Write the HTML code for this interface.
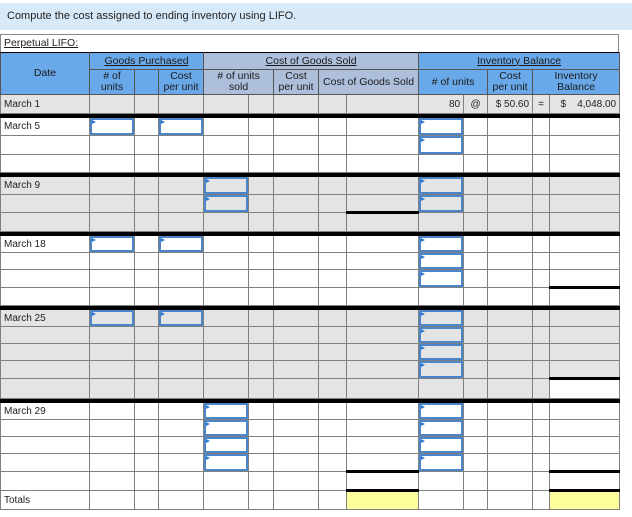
<!DOCTYPE html>
<html><head><style>
body{margin:0;background:#fff;font-family:"Liberation Sans",Arial,sans-serif;font-size:10px;color:#222;width:632px;height:517px;overflow:hidden;position:relative}
.tabs{position:absolute;top:0;left:0;width:632px;height:3px;border-bottom:1px solid #bbb}
.title{position:absolute;top:3px;left:0;width:632px;height:27px;background:#d8eaf8;font-size:11px;line-height:27px;padding-left:7px;box-sizing:border-box;color:#222}
.pl{position:absolute;top:34px;left:0;width:619px;height:18px;border:1px solid #888;border-bottom:none;box-sizing:border-box;line-height:16px;padding-left:3px;text-decoration:underline;font-size:10.5px}
table{position:absolute;top:52px;left:0;border-collapse:collapse;table-layout:fixed;width:619px}
td{border:1px solid #808080;padding:0;height:16px;position:relative;overflow:visible;white-space:nowrap}
.h td{text-align:center;line-height:11px;border-color:#555;font-size:10.5px;color:#1a1a1a}
.b{background:#6aa9e9}.l{background:#aebfdc}
.g td{background:#e4e4e4}
.sep td{height:3px;background:#000;border:1px solid #000}
.dl{padding-left:3px}
.in::after{content:"";position:absolute;left:0;top:0;right:0;bottom:0;border:2px solid #4a86c8;background:#fff}
.g .in::after{background:#e4e4e4}
.in::before{content:"";position:absolute;left:2px;top:2px;border-left:4px solid #2a7ad8;border-top:2px solid transparent;border-bottom:2px solid transparent;z-index:2}
.y{background:#fdfd9c!important}
.tk{border-top:3px solid #000}
.r{text-align:right;padding-right:3px}
.c{text-align:center}
u{text-decoration:underline}
</style></head><body>
<div class="tabs"></div>
<div class="title">Compute the cost assigned to ending inventory using LIFO.</div>
<div class="pl">Perpetual LIFO:</div>
<table>
<colgroup><col style="width:89px"><col style="width:45px"><col style="width:24px"><col style="width:45px"><col style="width:45px"><col style="width:25px"><col style="width:45px"><col style="width:28px"><col style="width:72px"><col style="width:45px"><col style="width:24px"><col style="width:45px"><col style="width:17px"><col style="width:70px"></colgroup>
<tr class="h" style="height:17px"><td class="b" rowspan="2" style="border-top:1px solid #000">Date</td><td class="b" colspan="3" style="border-top:1px solid #000"><u>Goods Purchased</u></td><td class="l" colspan="5" style="border-top:1px solid #000"><u>Cost of Goods Sold</u></td><td class="b" colspan="5" style="border-top:1px solid #000"><u>Inventory Balance</u></td></tr>
<tr class="h" style="height:25px"><td class="b"># of<br>units</td><td class="b"></td><td class="b">Cost<br>per unit</td><td class="l" colspan="2"># of units<br>sold</td><td class="l">Cost<br>per unit</td><td class="l" colspan="2">Cost of Goods Sold</td><td class="b" colspan="2"># of units</td><td class="b">Cost<br>per unit</td><td class="b" colspan="2">Inventory<br>Balance</td></tr>
<tr class="g" style="height:19px"><td class="dl">March 1</td><td></td><td></td><td></td><td></td><td></td><td></td><td></td><td></td><td class="r">80</td><td class="c">@</td><td class="r">$ 50.60</td><td class="c">=</td><td class="r">$ &nbsp;&nbsp;&nbsp;4,048.00</td></tr>
<tr class="sep"><td colspan="14"></td></tr>
<tr style="height:18px"><td class="dl">March 5</td><td class="in"></td><td></td><td class="in"></td><td></td><td></td><td></td><td></td><td></td><td class="in"></td><td></td><td></td><td></td><td></td></tr>
<tr style="height:19px"><td></td><td></td><td></td><td></td><td></td><td></td><td></td><td></td><td></td><td class="in"></td><td></td><td></td><td></td><td></td></tr>
<tr style="height:18px"><td></td><td></td><td></td><td></td><td></td><td></td><td></td><td></td><td></td><td></td><td></td><td></td><td></td><td></td></tr>
<tr class="sep"><td colspan="14"></td></tr>
<tr class="g" style="height:18px"><td class="dl">March 9</td><td></td><td></td><td></td><td class="in"></td><td></td><td></td><td></td><td></td><td class="in"></td><td></td><td></td><td></td><td></td></tr>
<tr class="g" style="height:17px"><td></td><td></td><td></td><td></td><td class="in"></td><td></td><td></td><td></td><td></td><td class="in"></td><td></td><td></td><td></td><td></td></tr>
<tr class="g" style="height:19px"><td></td><td></td><td></td><td></td><td></td><td></td><td></td><td></td><td class="tk"></td><td></td><td></td><td></td><td></td><td></td></tr>
<tr class="sep"><td colspan="14"></td></tr>
<tr style="height:17px"><td class="dl">March 18</td><td class="in"></td><td></td><td class="in"></td><td></td><td></td><td></td><td></td><td></td><td class="in"></td><td></td><td></td><td></td><td></td></tr>
<tr style="height:17px"><td></td><td></td><td></td><td></td><td></td><td></td><td></td><td></td><td></td><td class="in"></td><td></td><td></td><td></td><td></td></tr>
<tr style="height:17px"><td></td><td></td><td></td><td></td><td></td><td></td><td></td><td></td><td></td><td class="in"></td><td></td><td></td><td></td><td></td></tr>
<tr style="height:16px"><td></td><td></td><td></td><td></td><td></td><td></td><td></td><td></td><td></td><td></td><td></td><td></td><td></td><td class="tk"></td></tr>
<tr class="sep"><td colspan="14"></td></tr>
<tr class="g" style="height:17px"><td class="dl">March 25</td><td class="in"></td><td></td><td class="in"></td><td></td><td></td><td></td><td></td><td></td><td class="in"></td><td></td><td></td><td></td><td></td></tr>
<tr class="g" style="height:17px"><td></td><td></td><td></td><td></td><td></td><td></td><td></td><td></td><td></td><td class="in"></td><td></td><td></td><td></td><td></td></tr>
<tr class="g" style="height:17px"><td></td><td></td><td></td><td></td><td></td><td></td><td></td><td></td><td></td><td class="in"></td><td></td><td></td><td></td><td></td></tr>
<tr class="g" style="height:17px"><td></td><td></td><td></td><td></td><td></td><td></td><td></td><td></td><td></td><td class="in"></td><td></td><td></td><td></td><td></td></tr>
<tr class="g" style="height:20px"><td></td><td></td><td></td><td></td><td></td><td></td><td></td><td></td><td></td><td></td><td></td><td></td><td></td><td class="tk" style="background:#fff"></td></tr>
<tr class="sep"><td colspan="14"></td></tr>
<tr style="height:17px"><td class="dl">March 29</td><td></td><td></td><td></td><td class="in"></td><td></td><td></td><td></td><td></td><td class="in"></td><td></td><td></td><td></td><td></td></tr>
<tr style="height:17px"><td></td><td></td><td></td><td></td><td class="in"></td><td></td><td></td><td></td><td></td><td class="in"></td><td></td><td></td><td></td><td></td></tr>
<tr style="height:17px"><td></td><td></td><td></td><td></td><td class="in"></td><td></td><td></td><td></td><td></td><td class="in"></td><td></td><td></td><td></td><td></td></tr>
<tr style="height:17px"><td></td><td></td><td></td><td></td><td class="in"></td><td></td><td></td><td></td><td></td><td class="in"></td><td></td><td></td><td></td><td></td></tr>
<tr style="height:19px"><td></td><td></td><td></td><td></td><td></td><td></td><td></td><td></td><td class="tk"></td><td></td><td></td><td></td><td></td><td class="tk"></td></tr>
<tr style="height:19px"><td class="dl">Totals</td><td></td><td></td><td></td><td></td><td></td><td></td><td></td><td class="y tk"></td><td></td><td></td><td></td><td></td><td class="y tk"></td></tr>
</table>
</body></html>
